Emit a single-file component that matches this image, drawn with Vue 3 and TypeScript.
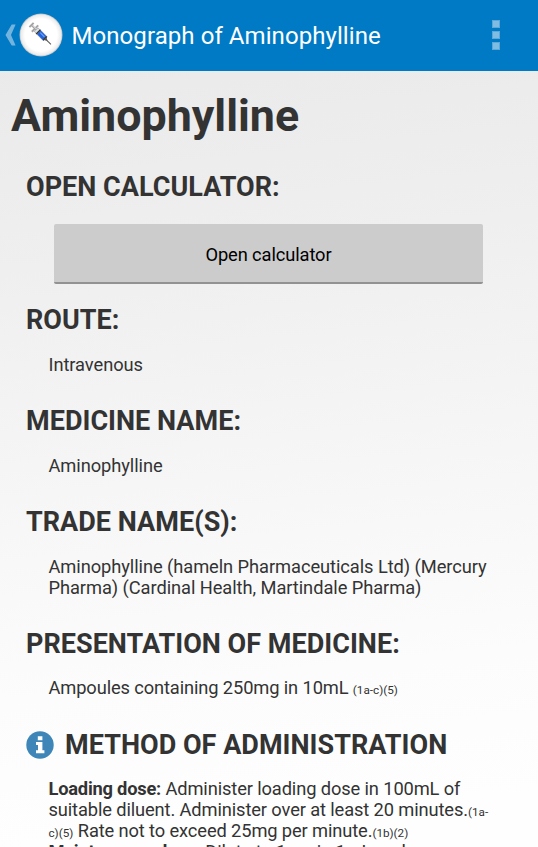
<script setup lang="ts">
interface Part {
  text: string
  kind?: 'bold' | 'ref'
}
interface Section {
  title: string
  info?: boolean
  button?: string
  dense?: boolean
  lines?: Part[][]
}

const sections: Section[] = [
  { title: 'OPEN CALCULATOR:', button: 'Open calculator' },
  { title: 'ROUTE:', lines: [[{ text: 'Intravenous' }]] },
  { title: 'MEDICINE NAME:', lines: [[{ text: 'Aminophylline' }]] },
  {
    title: 'TRADE NAME(S):',
    lines: [
      [{ text: 'Aminophylline (hameln Pharmaceuticals Ltd) (Mercury' }],
      [{ text: 'Pharma) (Cardinal Health, Martindale Pharma)' }],
    ],
  },
  {
    title: 'PRESENTATION OF MEDICINE:',
    dense: true,
    lines: [[{ text: 'Ampoules containing 250mg in 10mL ' }, { text: '(1a-c)(5)', kind: 'ref' }]],
  },
  {
    title: 'METHOD OF ADMINISTRATION',
    info: true,
    dense: true,
    lines: [
      [{ text: 'Loading dose:', kind: 'bold' }, { text: ' Administer loading dose in 100mL of' }],
      [{ text: 'suitable diluent. Administer over at least 20 minutes.' }, { text: '(1a-', kind: 'ref' }],
      [
        { text: 'c)(5)', kind: 'ref' },
        { text: ' Rate not to exceed 25mg per minute.' },
        { text: '(1b)(2)', kind: 'ref' },
      ],
      [{ text: 'Maintenance dose:', kind: 'bold' }, { text: ' Dilute to 1mg in 1mL and' }],
    ],
  },
]
</script>

<template>
  <div class="screen">
    <header class="bar">
      <svg class="back" width="12" height="22" viewBox="0 0 12 22">
        <path d="M6.7 .5H10.6L6 11 10.6 21.5H6.7L.5 11Z" fill="#72b4de" />
      </svg>
      <svg class="logo" width="44" height="44" viewBox="0 0 44 44">
        <defs>
          <radialGradient id="disc">
            <stop offset="0.75" stop-color="#fff" />
            <stop offset="0.93" stop-color="#ececec" />
            <stop offset="1" stop-color="#b5bdc3" />
          </radialGradient>
        </defs>
        <circle cx="22" cy="22" r="21.5" fill="url(#disc)" />
        <g transform="translate(11.8 11.3) rotate(45)">
          <path d="M1 -3V3M1 0H9M6 -4.5V4.5" stroke="#a5a5a5" stroke-width="2" fill="none" />
          <path d="M2 -.6H8" stroke="#eee" stroke-width=".8" />
          <rect x="7.5" y="-2.7" width="13" height="5.4" rx="1" fill="#dce2e9" stroke="#999" stroke-width=".7" />
          <rect x="11.5" y="-2.6" width="8" height="5.2" fill="#2463dc" />
          <path d="M12.5 -.8H18.5" stroke="#6caaf7" stroke-width="1" />
          <path d="M10.7 -3V3M20 -2.6V2.6" stroke="#333" stroke-width="1.4" />
          <path d="M20.5 -1.7L24 0L20.5 1.7Z" fill="#555" />
          <path d="M23 0H28.5" stroke="#555" stroke-width="1" />
        </g>
      </svg>
      <span class="bar-title">Monograph of Aminophylline</span>
      <div class="menu"><i></i><i></i><i></i></div>
    </header>
    <main>
      <h1>Aminophylline</h1>
      <section v-for="s in sections" :key="s.title">
        <h2>
          <svg v-if="s.info" class="info" width="28" height="28" viewBox="0 0 28 28">
            <circle cx="14" cy="14" r="13.7" fill="#3d86b7" />
            <path d="M11.8 5.2h4.6v4h-4.6zM10 11h6.4v8.2h2v3H10v-3h2v-5.2h-2z" fill="#fff" />
          </svg>
          <span>{{ s.title }}</span>
        </h2>
        <button v-if="s.button">{{ s.button }}</button>
        <div v-if="s.lines" class="body" :class="{ dense: s.dense }">
          <p v-for="(line, i) in s.lines" :key="i"><span v-for="(part, j) in line" :key="j" :class="part.kind">{{ part.text }}</span></p>
        </div>
      </section>
    </main>
  </div>
</template>

<style>
body {
  overflow: hidden;
}
</style>
<style scoped>
.screen {
  height: 847px;
  overflow: hidden;
  font-family: Roboto, sans-serif;
  color: #333;
  background: linear-gradient(174deg, #eaeaea 60px, #efefef 270px, #f7f7f7 530px, #fcfcfc 700px, #fefefe 847px);
}
.bar {
  height: 71px;
  box-sizing: border-box;
  display: flex;
  align-items: center;
  padding: 0 38px 1px 5px;
  background: #007ac5;
}
.logo {
  margin-left: 2px;
}
.bar-title {
  margin-left: 8.5px;
  padding-top: 1px;
  flex: 1;
  font-size: 24px;
  line-height: 30px;
  letter-spacing: 0.07px;
  color: #fff;
  white-space: nowrap;
}
.menu {
  display: flex;
  flex-direction: column;
  gap: 3px;
}
.menu i {
  width: 8px;
  height: 8px;
  box-sizing: border-box;
  background: #80bce2;
  border: 1px solid #5ba8da;
}
h1 {
  margin: 19px 0 0 11px;
  font-size: 44.8px;
  line-height: 52px;
  font-weight: 700;
  white-space: nowrap;
}
section {
  padding-top: 30.2px;
}
section:first-of-type {
  padding-top: 29px;
}
h2 {
  margin: 0 0 0 26px;
  height: 32px;
  display: flex;
  align-items: center;
  font-size: 27px;
  line-height: 32px;
  font-weight: 700;
  letter-spacing: 0.03px;
  white-space: nowrap;
}
.info {
  margin-right: 11px;
}
button {
  display: block;
  width: 429px;
  height: 60px;
  margin: 21px 0 -9.8px 54px;
  padding: 2px 0 0;
  border: 0;
  border-bottom: 2px solid #929292;
  border-radius: 2px;
  background: #ccc;
  color: #000;
  font: 18.3px Roboto, sans-serif;
  letter-spacing: -0.1px;
}
.body {
  margin: 17.6px 0 0 48.5px;
}
p {
  margin: 0;
  height: 21px;
  font-size: 18.3px;
  line-height: 21px;
  letter-spacing: -0.07px;
  white-space: pre;
}
.dense p {
  letter-spacing: -0.12px;
}
.bold {
  font-weight: 700;
  letter-spacing: -0.22px;
}
.ref {
  font-size: 11.7px;
  letter-spacing: 0;
}
</style>
